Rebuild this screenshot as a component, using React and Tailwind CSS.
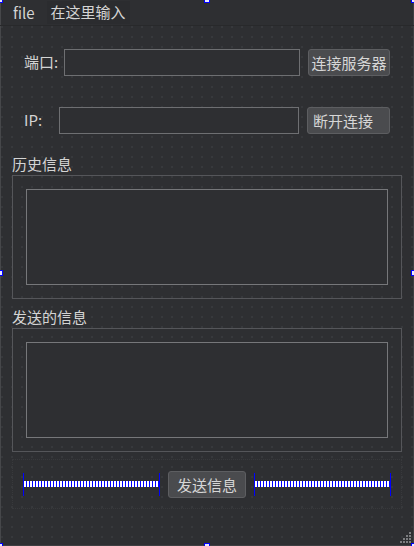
import React from 'react'

const font = "font-['Noto_Sans_CJK_SC','Noto_Sans',sans-serif]"

function Spacer() {
  return (
    <div className="flex items-center h-[23px] w-[137px] border-x border-[#0000ff]">
      <div className="h-[6px] w-full bg-[repeating-linear-gradient(to_right,#ffffff_0px,#ffffff_2px,#0000ff_2px,#0000ff_3px)]" />
    </div>
  )
}

function Handle({ className }) {
  return <div className={`absolute w-[6px] h-[6px] border border-[#0000ff] bg-[#e8e8ff] ${className}`} />
}

function Group({ title, mt }) {
  return (
    <>
      <div className={`${mt} pl-[12px] leading-[20px] h-[20px]`}>{title}</div>
      <div className="mt-[1px] ml-[12px] w-[390px] h-[124px] border border-[#55565a] p-[13px]">
        <div className="w-full h-full border border-[#76777a] bg-[#2e2f32]" />
      </div>
    </>
  )
}

export default function App() {
  return (
    <div
      className={`relative w-[414px] h-[546px] overflow-hidden bg-[#2e2f32] text-[15px] text-[#d4d4d4] ${font} shadow-[inset_1px_0_0_#46474a,inset_-1px_0_0_#3e3f42,inset_0_-1px_0_#3e3f42]`}
    >
      {/* menu bar */}
      <div className="flex items-center h-[26px] border-b border-[#28292b]">
        <span className="ml-[13px] leading-[20px]">file</span>
        <span className="ml-[12px] h-[23px] px-[4px] flex items-center bg-[#2b2c2f]">在这里输入</span>
      </div>

      {/* form with designer grid */}
      <div className="h-[520px] bg-[radial-gradient(circle,#3d3e42_0.6px,transparent_0.9px)] bg-[length:10px_10px] bg-[position:-3px_-4px]">
        <div className="flex items-center pt-[23px]">
          <span className="w-[40px] ml-[24px]">端口:</span>
          <div className="w-[236px] h-[27px] border border-[#6e6f72] bg-[#2e2f32]" />
          <button className="ml-[8px] w-[82px] h-[27px] rounded-[3px] border border-[#5d5e61] bg-[#4a4b4e] text-[#d6d6d6] leading-none">
            连接服务器
          </button>
        </div>

        <div className="flex items-center mt-[31px]">
          <span className="w-[35px] ml-[24px]">IP:</span>
          <div className="w-[240px] h-[27px] border border-[#6e6f72] bg-[#2e2f32]" />
          <button className="ml-[8px] w-[83px] h-[27px] rounded-[3px] border border-[#5d5e61] bg-[#4a4b4e] text-[#d6d6d6] leading-none text-left pl-[5px]">
            断开连接
          </button>
        </div>

        <Group title="历史信息" mt="mt-[20px]" />
        <Group title="发送的信息" mt="mt-[8px]" />

        <div className="mt-[7px] ml-[12px] w-[390px] h-[50px] border border-dotted border-[#38393c] flex items-center pl-[10px]">
          <Spacer />
          <button className="ml-[8px] w-[78px] h-[27px] rounded-[3px] border border-[#5d5e61] bg-[#4a4b4e] text-[#d6d6d6] leading-none">
            发送信息
          </button>
          <div className="ml-[8px]">
            <Spacer />
          </div>
        </div>
      </div>

      {/* size grip */}
      <svg className="absolute right-[3px] bottom-[3px]" width="11" height="11" viewBox="0 0 11 11">
        {[[9, 0], [6, 3], [9, 3], [3, 6], [6, 6], [9, 6], [0, 9], [3, 9], [6, 9], [9, 9]].map(([x, y]) => (
          <rect key={`${x}-${y}`} x={x} y={y} width="2" height="2" fill="#7c7d80" />
        ))}
      </svg>

      {/* selection handles */}
      <Handle className="-left-[3px] -top-[3px]" />
      <Handle className="left-[204px] -top-[3px]" />
      <Handle className="-right-[3px] -top-[3px]" />
      <Handle className="-left-[3px] top-[270px]" />
      <Handle className="-right-[3px] top-[270px]" />
      <Handle className="-left-[3px] -bottom-[3px]" />
      <Handle className="left-[204px] -bottom-[3px]" />
      <Handle className="-right-[3px] -bottom-[3px]" />
    </div>
  )
}
